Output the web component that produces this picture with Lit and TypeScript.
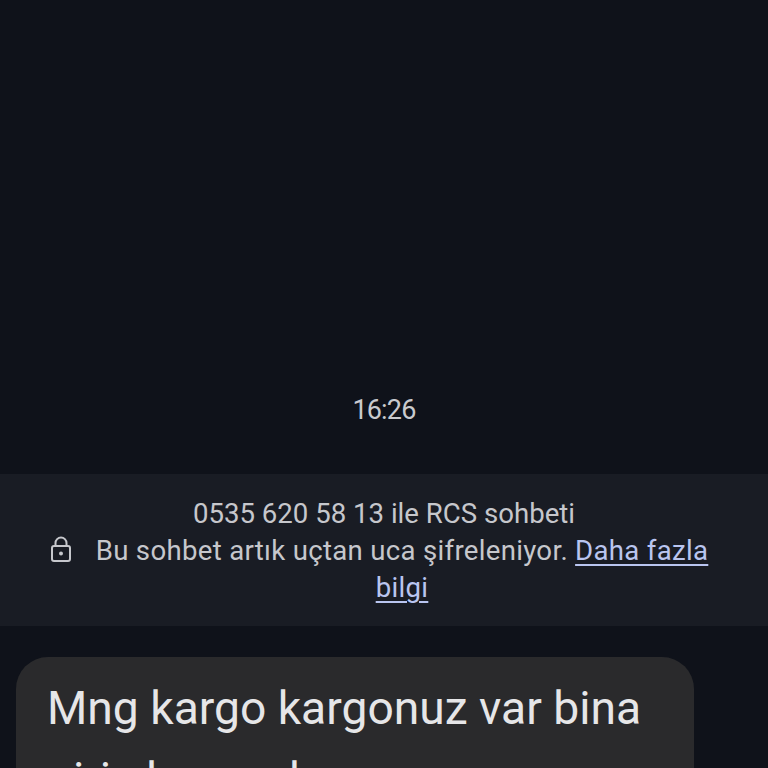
import { LitElement, html, css } from 'lit';
import { customElement } from 'lit/decorators.js';

@customElement('app-root')
export class AppRoot extends LitElement {
  static styles = css`
    :host {
      display: block;
      height: 768px;
      overflow: hidden;
      background: #0f121a;
      font-family: Roboto, 'Noto Sans', sans-serif;
    }

    .time {
      height: 474px;
      box-sizing: border-box;
      padding-top: 395px;
      text-align: center;
      font-size: 27px;
      line-height: 31px;
      letter-spacing: -0.8px;
      color: #c9cace;
    }

    .notice {
      height: 152px;
      box-sizing: border-box;
      padding-top: 21px;
      background: #191c24;
      color: #c6c7cc;
      font-size: 27.6px;
      line-height: 37px;
      text-align: center;
    }

    .notice p {
      margin: 0;
    }

    .secure {
      display: flex;
      align-items: flex-start;
      gap: 21px;
      padding-left: 49px;
    }

    .secure svg {
      flex: none;
      width: 24px;
      height: 28px;
      margin-top: 4px;
    }

    .secure p {
      width: 616px;
      letter-spacing: 0.3px;
    }

    a {
      color: #b9c5f0;
      text-decoration: underline;
      text-decoration-thickness: 2px;
      text-underline-offset: 4px;
    }

    .thread {
      padding: 31px 74px 0 16px;
    }

    .bubble {
      height: 200px;
      padding: 16px 31px 0;
      border-radius: 32px;
      background: #2a2a2c;
      color: #e6e6e8;
      font-size: 46.2px;
      line-height: 71px;
    }
  `;

  render() {
    return html`
      <div class="time">16:26</div>
      <section class="notice">
        <p>0535 620 58 13 ile RCS sohbeti</p>
        <div class="secure">
          <svg viewBox="0 0 24 28" fill="none" stroke="#c6c7cc" stroke-width="2">
            <rect x="3" y="10" width="18" height="15" rx="2"></rect>
            <path d="M6.5 10V7a5.500 5.500 0 0 1 11 0V10"></path>
            <circle cx="12" cy="17.500" r="2" fill="#c6c7cc" stroke="none"></circle>
          </svg>
          <p>Bu sohbet artık uçtan uca şifreleniyor. <a href="#">Daha fazla bilgi</a></p>
        </div>
      </section>
      <div class="thread">
        <div class="bubble">Mng kargo kargonuz var bina giriş kargo durum</div>
      </div>
    `;
  }
}
